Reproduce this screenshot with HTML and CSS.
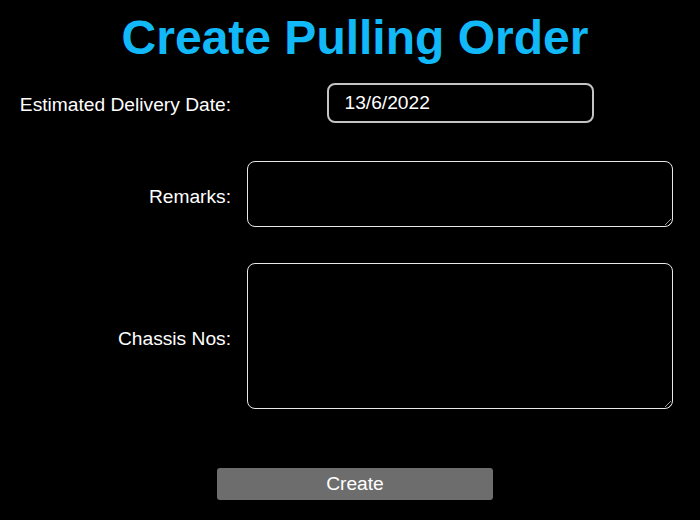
FILE: index.html
```html
<!DOCTYPE html>
<html lang="en">
<head>
<meta charset="utf-8">
<title>Create Pulling Order</title>
<link rel="stylesheet" href="styles.css">
</head>
<body>
<main class="page">
  <h1 class="title">Create Pulling Order</h1>
  <form class="form">
    <label class="label label-date" for="date">Estimated Delivery Date:</label>
    <div class="cell cell-date"><input id="date" class="date-input" type="text" value="13/6/2022"></div>

    <label class="label label-area row-remarks" for="remarks">Remarks:</label>
    <div class="cell row-remarks"><textarea id="remarks" class="area area-remarks"></textarea></div>

    <label class="label label-area row-chassis" for="chassis">Chassis Nos:</label>
    <div class="cell row-chassis"><textarea id="chassis" class="area area-chassis"></textarea></div>
  </form>
  <div class="actions">
    <button class="create-btn" type="button">Create</button>
  </div>
</main>
</body>
</html>
```
FILE: styles.css
```css
html, body {
  margin: 0;
  padding: 0;
  background: #000;
  overflow: hidden;
}

body {
  font-family: "Liberation Sans", Arial, sans-serif;
  color: #fff;
}

.page {
  width: 710px;
}

.title {
  margin: 10px 0 18px;
  text-align: center;
  font-size: 48px;
  font-weight: bold;
  line-height: 1.15;
  color: #12b9f9;
}

.form {
  display: grid;
  grid-template-columns: 231px 426px;
  column-gap: 16px;
  align-items: center;
}

.label {
  text-align: right;
  font-size: 19.2px;
  color: #fff;
}

.label-date {
  padding-top: 3px;
}

.label-area {
  padding-top: 6px;
}

.cell {
  display: flex;
  justify-content: center;
}

.row-remarks {
  margin-top: 38px;
}

.row-chassis {
  margin-top: 36px;
}

.date-input {
  box-sizing: border-box;
  width: 267px;
  height: 40px;
  padding: 0 16px;
  border: 2px solid #c4c4c4;
  border-radius: 8px;
  background: #000;
  color: #fff;
  font-family: "Liberation Sans", Arial, sans-serif;
  font-size: 19.2px;
  outline: none;
}

.area {
  box-sizing: border-box;
  width: 426px;
  margin: 0;
  border: 1px solid #e8e8e8;
  border-radius: 8px;
  background: #000;
  color: #fff;
  font-family: "Liberation Sans", Arial, sans-serif;
  font-size: 16px;
  display: block;
}

.area-remarks {
  height: 66px;
}

.area-chassis {
  height: 146px;
}

.actions {
  display: flex;
  justify-content: center;
  margin-top: 59px;
}

.create-btn {
  width: 276px;
  height: 32px;
  border: none;
  border-radius: 3px;
  background: #6d6d6d;
  color: #fff;
  font-family: "Liberation Sans", Arial, sans-serif;
  font-size: 19.2px;
  padding: 0;
}
```
